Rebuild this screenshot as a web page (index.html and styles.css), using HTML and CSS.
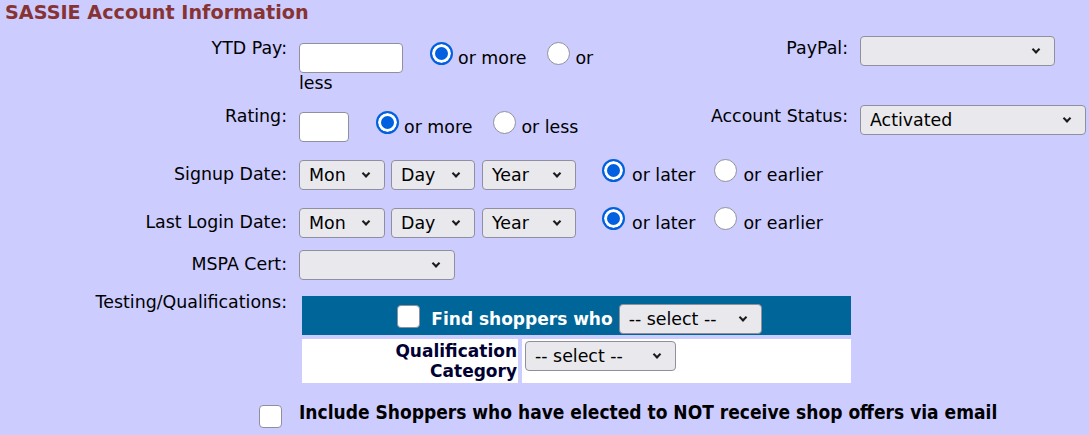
FILE: index.html
```html
<!DOCTYPE html>
<html lang="en">
<head>
<meta charset="utf-8">
<title>SASSIE Account Information</title>
<link rel="stylesheet" href="styles.css">
</head>
<body>
<div class="page">
  <h1 class="title">SASSIE Account Information</h1>
  <div class="form">
    <!-- Row 1 -->
    <div class="lbl r1l">YTD Pay:</div>
    <div class="ctl r1c"><input type="text" class="txt w104"><input type="radio" name="ytd" class="rad after-field" checked><span class="opt">or more</span><input type="radio" name="ytd" class="rad after-text"><span class="opt">or less</span></div>
    <div class="lbl r1l">PayPal:</div>
    <div class="ctl r1s"><span class="sel"><select class="w195"><option></option></select></span></div>

    <!-- Row 2 -->
    <div class="lbl r2l">Rating:</div>
    <div class="ctl r2c"><input type="text" class="txt w50"><input type="radio" name="rating" class="rad after-field" checked><span class="opt">or more</span><input type="radio" name="rating" class="rad after-text"><span class="opt">or less</span></div>
    <div class="lbl r2l">Account Status:</div>
    <div class="ctl r2s"><span class="sel"><select class="w226"><option>Activated</option></select></span></div>

    <!-- Row 3 -->
    <div class="lbl r3l">Signup Date:</div>
    <div class="ctl span r3c"><span class="sel"><select class="w86"><option>Mon</option></select></span><span class="sel gap"><select class="w84"><option>Day</option></select></span><span class="sel gap2"><select class="w94"><option>Year</option></select></span><input type="radio" name="signup" class="rad after-date" checked><span class="opt">or later</span><input type="radio" name="signup" class="rad date-rad"><span class="opt">or earlier</span></div>

    <!-- Row 4 -->
    <div class="lbl r4l">Last Login Date:</div>
    <div class="ctl span r4c"><span class="sel"><select class="w86"><option>Mon</option></select></span><span class="sel gap"><select class="w84"><option>Day</option></select></span><span class="sel gap2"><select class="w94"><option>Year</option></select></span><input type="radio" name="login" class="rad after-date" checked><span class="opt">or later</span><input type="radio" name="login" class="rad date-rad"><span class="opt">or earlier</span></div>

    <!-- Row 5 -->
    <div class="lbl r5l">MSPA Cert:</div>
    <div class="ctl span r5c"><span class="sel"><select class="w156"><option></option></select></span></div>

    <!-- Row 6 -->
    <div class="lbl r6l">Testing/Qualifications:</div>
    <div class="ctl span r6c">
      <div class="qtable">
        <div class="qhead"><input type="checkbox" class="chk"><span class="qhead-text">Find shoppers who</span><span class="sel"><select class="w143"><option>-- select --</option></select></span></div>
        <div class="qcell qname">Qualification<br>Category</div>
        <div class="qcell qvalue"><span class="sel"><select class="w151"><option>-- select --</option></select></span></div>
      </div>
    </div>

    <!-- Row 7 -->
    <div class="lbl r7l"><input type="checkbox" class="chk"></div>
    <div class="ctl span r7c"><span class="include">Include Shoppers who have elected to NOT receive shop offers via email</span></div>
  </div>
</div>
</body>
</html>
```

FILE: styles.css
```css
html, body {
  margin: 0;
  padding: 0;
}

body {
  background: #ccccff;
  font-family: "DejaVu Sans", Verdana, sans-serif;
  font-size: 17.4px;
  line-height: 20px;
  color: #000;
}

.page {
  width: 1089px;
  height: 435px;
  overflow: hidden;
}

.title {
  margin: 0;
  padding: 1px 0 0 5px;
  height: 33px;
  box-sizing: border-box;
  font-size: 19.2px;
  line-height: 24px;
  font-weight: bold;
  color: #883333;
}

.form {
  display: grid;
  grid-template-columns: 287px 313px 224px 1fr;
  grid-template-rows: 70px 48px 48px 46px 44px 106px 39px;
  column-gap: 12px;
  align-items: start;
  margin-top: 1px;
}

.lbl {
  text-align: right;
  white-space: nowrap;
}

.span {
  grid-column: 2 / 5;
}

/* vertical offsets per row */
.r1l { padding-top: 4px; }
.r1c { padding-top: 8px; }
.r1s { padding-top: 2px; }
.r2l { padding-top: 2px; }
.r2c { padding-top: 7px; }
.r2s { padding-top: 1px; }
.r3l { padding-top: 12px; }
.r3c { padding-top: 7px; }
.r4l { padding-top: 12px; }
.r4c { padding-top: 7px; }
.r5l { padding-top: 8px; }
.r5c { padding-top: 4px; }
.r6l { padding-top: 2px; }
.r6c { padding-top: 6px; }
.r7l { padding-top: 9px; padding-right: 5px; }
.r7c { padding-top: 6px; }

/* controls */
.txt {
  box-sizing: border-box;
  height: 30px;
  margin: 0;
  padding: 0 4px;
  border: 1px solid #8f8f9d;
  border-radius: 4px;
  background: #fff;
  font: inherit;
  vertical-align: baseline;
}
.w104 { width: 104px; }
.w50 { width: 50px; }

.rad {
  -webkit-appearance: none;
  appearance: none;
  box-sizing: border-box;
  width: 23px;
  height: 23px;
  margin: 0 5px 0 0;
  border: 1px solid #8f8f9d;
  border-radius: 50%;
  background: #fff;
  vertical-align: -1px;
}
.rad:checked {
  border: 2px solid #0060df;
  background: #0060df;
  box-shadow: inset 0 0 0 3px #fff;
}
.after-field { margin-left: 27px; }
.after-text { margin-left: 21px; }
.after-date { margin-left: 26px; margin-right: 7px; }
.date-rad { margin-left: 19px; margin-right: 6px; }

.chk {
  -webkit-appearance: none;
  appearance: none;
  box-sizing: border-box;
  width: 23px;
  height: 23px;
  margin: 0;
  border: 1px solid #8f8f9d;
  border-radius: 4px;
  background: #fff;
  vertical-align: top;
}

.sel {
  position: relative;
  display: inline-block;
}
.sel::after {
  content: "";
  position: absolute;
  right: 16px;
  top: 50%;
  width: 4px;
  height: 4px;
  border-right: 2px solid #1a1a1a;
  border-bottom: 2px solid #1a1a1a;
  transform: translateY(-75%) rotate(45deg);
  pointer-events: none;
}
.sel.gap { margin-left: 6px; }
.sel.gap2 { margin-left: 7px; }

.sel select {
  -webkit-appearance: none;
  appearance: none;
  box-sizing: border-box;
  height: 30px;
  margin: 0;
  padding: 0 0 0 9px;
  border: 1px solid #8f8f9d;
  border-radius: 4px;
  background: #e9e9ed;
  color: #000;
  font: inherit;
  vertical-align: baseline;
}
.w195 { width: 195px; }
.w226 { width: 226px; }
.w86 { width: 86px; }
.w84 { width: 84px; }
.w94 { width: 94px; }
.w156 { width: 156px; }
.w143 { width: 143px; }
.w151 { width: 151px; }

/* qualifications table */
.qtable {
  display: grid;
  grid-template-columns: 216px 329px;
  gap: 4px;
  margin-left: 3px;
  width: 549px;
}
.qhead {
  grid-column: 1 / 3;
  height: 39px;
  box-sizing: border-box;
  background: #006699;
  display: flex;
  align-items: center;
  justify-content: center;
  padding: 6px 0 0 6px;
}
.qhead .chk {
  margin: 0 11px 5px 0;
}
.qhead-text {
  color: #fff;
  font-weight: bold;
  font-size: 17px;
  margin-right: 6px;
}
.qcell {
  background: #fff;
  height: 44px;
  box-sizing: border-box;
}
.qname {
  text-align: right;
  font-weight: bold;
  font-size: 17px;
  color: #000033;
  padding: 2px 1px 0 0;
}
.qvalue {
  padding: 2px 0 0 3px;
}

.include {
  font-family: "DejaVu Sans Condensed", "DejaVu Sans", sans-serif;
  font-stretch: condensed;
  font-weight: bold;
  font-size: 19px;
  white-space: nowrap;
}
```
